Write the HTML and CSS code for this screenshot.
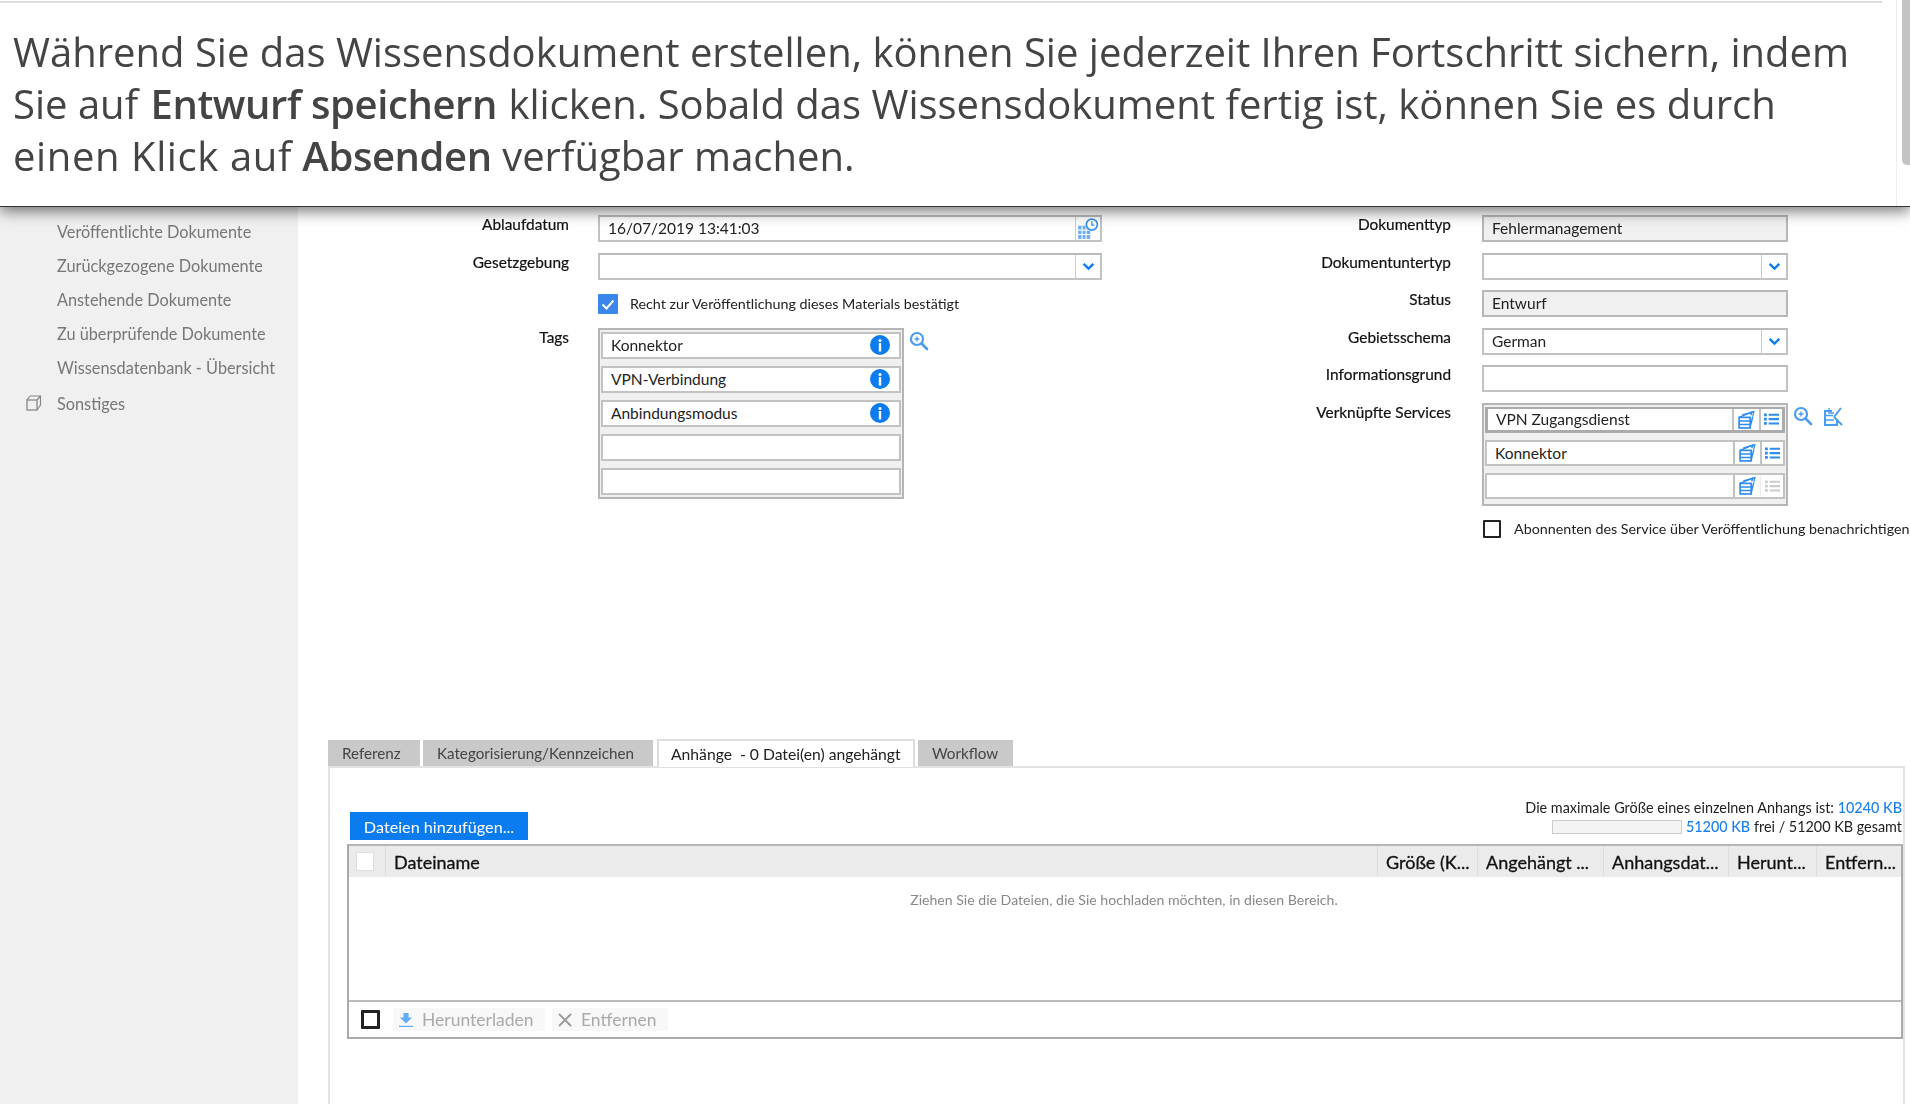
FILE: index.html

```html
<!DOCTYPE html>
<html lang="de">
  <head>
    <meta charset="UTF-8" />
    <title>Wissensdokument erstellen</title>
    <link rel="stylesheet" href="styles.css">
  </head>
  <body>
    <svg class="icon-defs" width="0" height="0">
      <symbol id="i-search" viewBox="0 0 20 20">
        <circle cx="8" cy="8" r="6" fill="none" stroke="currentColor" stroke-width="2.2"/>
        <path d="M12.5 12.5L18 18" stroke="currentColor" stroke-width="2.6" stroke-linecap="round"/>
        <path d="M5.5 8h5M8 5.5v5" stroke="currentColor" stroke-width="1.4"/>
      </symbol>
      <symbol id="i-info" viewBox="0 0 20 20">
        <circle cx="10" cy="10" r="10" fill="currentColor"/>
        <rect x="8.8" y="8" width="2.4" height="8.5" fill="#fff"/>
        <circle cx="10" cy="5.4" r="1.5" fill="#fff"/>
      </symbol>
      <symbol id="i-chevron" viewBox="0 0 12 8">
        <path d="M1.5 1.5L6 6l4.5-4.5" fill="none" stroke="currentColor" stroke-width="2.2"/>
      </symbol>
      <symbol id="i-stack" viewBox="0 0 18 18">
        <path d="M2 7l12-5-1 3" fill="none" stroke="currentColor" stroke-width="1.4"/>
        <path d="M5 4.5l11-3-1 4" fill="none" stroke="currentColor" stroke-width="1.2"/>
        <rect x="2" y="7" width="10.5" height="10" fill="none" stroke="currentColor" stroke-width="1.6"/>
        <path d="M2 10.4h10.5M2 13.7h10.5M12.5 16l2.5-10" stroke="currentColor" stroke-width="1.4" fill="none"/>
      </symbol>
      <symbol id="i-list" viewBox="0 0 16 14">
        <path d="M0 1h3v3H0zM0 5.6h3v3H0zM0 10.2h3v3H0zM5 1.4h11v2.2H5zM5 6h11v2.2H5zM5 10.6h11v2.2H5z" fill="currentColor"/>
      </symbol>
      <symbol id="i-edit" viewBox="0 0 20 20">
        <path d="M9 5H2v14h12v-6" fill="none" stroke="currentColor" stroke-width="2"/>
        <path d="M2 9.500h8M2 14h9" stroke="currentColor" stroke-width="1.600"/>
        <path d="M11 11l8 8M11 11l7-9" fill="none" stroke="currentColor" stroke-width="2"/>
        <path d="M6 2v5h5" fill="none" stroke="currentColor" stroke-width="1.300"/>
      </symbol>
      <symbol id="i-calendar" viewBox="0 0 20 20">
        <rect x="1" y="7" width="11" height="12" fill="currentColor" opacity=".75"/>
        <path d="M1 11h11M1 15h11M4.6 7v12M8.3 7v12" stroke="#fff" stroke-width="1"/>
        <circle cx="13.5" cy="6" r="5" fill="#fff" stroke="currentColor" stroke-width="1.6"/>
        <path d="M13.5 3v3.4h2.4" fill="none" stroke="currentColor" stroke-width="1.2"/>
      </symbol>
      <symbol id="i-copy" viewBox="0 0 16 16">
        <rect x="1" y="5" width="10" height="10" fill="none" stroke="currentColor" stroke-width="1.3"/>
        <path d="M1 5l3-4h10.500v9L11 15M11 5l3.500-4" fill="none" stroke="currentColor" stroke-width="1.2"/>
      </symbol>
    </svg>

    <!-- hint box on top of the screenshot -->
    <div class="banner">
      <div class="banner-rule"></div>
      <p>Während Sie das Wissensdokument erstellen, können Sie jederzeit Ihren Fortschritt sichern, indem<br>Sie auf <strong class="bold-first">Entwurf speichern</strong> klicken. Sobald das Wissensdokument fertig ist, können Sie es durch<br><span class="lead-wide">einen Klick auf</span> <strong>Absenden</strong> verfügbar machen.</p>
      <div class="scrollbar"><div class="scrollbar-thumb"></div></div>
    </div>

    <div class="app">
      <nav class="sidebar">
        <a class="nav-item">Veröffentlichte Dokumente</a>
        <a class="nav-item">Zurückgezogene Dokumente</a>
        <a class="nav-item">Anstehende Dokumente</a>
        <a class="nav-item">Zu überprüfende Dokumente</a>
        <a class="nav-item">Wissensdatenbank - Übersicht</a>
        <a class="nav-item nav-group"><svg class="nav-icon"><use href="#i-copy"/></svg>Sonstiges</a>
      </nav>

      <main class="main">
        <section class="form">
          <div class="form-side form-left">
            <label class="form-label">Ablaufdatum</label>
            <div class="field">
              <span class="field-text">16/07/2019 13:41:03</span>
              <span class="field-btn"><svg class="icon-calendar"><use href="#i-calendar"/></svg></span>
            </div>

            <label class="form-label">Gesetzgebung</label>
            <div class="field">
              <span class="field-text"></span>
              <span class="field-btn"><svg class="icon-chevron"><use href="#i-chevron"/></svg></span>
            </div>

            <span></span>
            <div class="check-row">
              <span class="check check-on">
                <svg viewBox="0 0 20 20"><path d="M4.500 10.500l4 4 7-8" fill="none" stroke="#fff" stroke-width="2"/></svg>
              </span>
              <span>Recht zur Veröffentlichung dieses Materials bestätigt</span>
            </div>

            <label class="form-label">Tags</label>
            <div class="with-tools">
              <div class="multi tags">
                <div class="multi-row"><span class="field-text">Konnektor</span><svg class="icon-info"><use href="#i-info"/></svg></div>
                <div class="multi-row"><span class="field-text">VPN-Verbindung</span><svg class="icon-info"><use href="#i-info"/></svg></div>
                <div class="multi-row"><span class="field-text">Anbindungsmodus</span><svg class="icon-info"><use href="#i-info"/></svg></div>
                <div class="multi-row"></div>
                <div class="multi-row"></div>
              </div>
              <svg class="tool-icon"><use href="#i-search"/></svg>
            </div>
          </div>

          <div class="form-side form-right">
            <label class="form-label">Dokumenttyp</label>
            <div class="field field-off"><span class="field-text">Fehlermanagement</span></div>

            <label class="form-label">Dokumentuntertyp</label>
            <div class="field">
              <span class="field-text"></span>
              <span class="field-btn"><svg class="icon-chevron"><use href="#i-chevron"/></svg></span>
            </div>

            <label class="form-label">Status</label>
            <div class="field field-off"><span class="field-text">Entwurf</span></div>

            <label class="form-label">Gebietsschema</label>
            <div class="field">
              <span class="field-text">German</span>
              <span class="field-btn"><svg class="icon-chevron"><use href="#i-chevron"/></svg></span>
            </div>

            <label class="form-label">Informationsgrund</label>
            <div class="field"></div>

            <label class="form-label">Verknüpfte Services</label>
            <div class="with-tools">
              <div class="multi services">
                <div class="multi-row multi-row-active">
                  <span class="field-text">VPN Zugangsdienst</span>
                  <span class="cell"><svg class="icon-stack"><use href="#i-stack"/></svg></span>
                  <span class="cell"><svg class="icon-list"><use href="#i-list"/></svg></span>
                </div>
                <div class="multi-row">
                  <span class="field-text">Konnektor</span>
                  <span class="cell"><svg class="icon-stack"><use href="#i-stack"/></svg></span>
                  <span class="cell"><svg class="icon-list"><use href="#i-list"/></svg></span>
                </div>
                <div class="multi-row">
                  <span class="field-text"></span>
                  <span class="cell"><svg class="icon-stack"><use href="#i-stack"/></svg></span>
                  <span class="cell cell-off"><svg class="icon-list"><use href="#i-list"/></svg></span>
                </div>
              </div>
              <svg class="tool-icon"><use href="#i-search"/></svg>
              <svg class="tool-icon tool-edit"><use href="#i-edit"/></svg>
            </div>

            <span></span>
            <div class="check-row check-row-notify">
              <span class="check"></span>
              <span>Abonnenten des Service über Veröffentlichung benachrichtigen</span>
            </div>
          </div>
        </section>

        <div class="tabs">
          <a class="tab">Referenz</a>
          <a class="tab tab-cat">Kategorisierung/Kennzeichen</a>
          <a class="tab tab-active">Anhänge&nbsp; - 0 Datei(en) angehängt</a>
          <a class="tab tab-flow">Workflow</a>
        </div>

        <section class="panel">
          <div class="panel-top">
            <button class="add-btn">Dateien hinzufügen...</button>
            <div class="quota">
              <div>Die maximale Größe eines einzelnen Anhangs ist: <b class="quota-num">10240 KB</b></div>
              <div class="quota-line"><span class="quota-bar"></span><span><b class="quota-num">51200 KB</b> frei / 51200 KB gesamt</span></div>
            </div>
          </div>

          <div class="files">
            <div class="files-head">
              <div class="head-cell"><span class="head-check"></span></div>
              <div class="head-cell">Dateiname</div>
              <div class="head-cell">Größe (K...</div>
              <div class="head-cell">Angehängt ...</div>
              <div class="head-cell">Anhangsdat...</div>
              <div class="head-cell">Herunt...</div>
              <div class="head-cell">Entfern...</div>
            </div>
            <div class="files-body">Ziehen Sie die Dateien, die Sie hochladen möchten, in diesen Bereich.</div>
            <div class="files-foot">
              <span class="check check-foot"></span>
              <span class="foot-btn foot-download">
                <svg class="foot-icon foot-icon-dl" viewBox="0 0 16 16"><path d="M5 0h6v5h4l-7 7-7-7h4zM0 14.500h16V16H0z" fill="#62aef5"/></svg>Herunterladen
              </span>
              <span class="foot-btn foot-remove">
                <svg class="foot-icon" viewBox="0 0 16 16"><path d="M2 2l12 12M14 2L2 14" stroke="#999" stroke-width="1.800"/></svg>Entfernen
              </span>
            </div>
          </div>
        </section>
      </main>
    </div>
  </body>
</html>
```

FILE: styles.css

```css
html,
body {
  margin: 0;
  padding: 0;
  height: 1104px;
  overflow: hidden;
  background: #fff;
}

body {
  font-family: "Lato", "Liberation Sans", sans-serif;
  color: #222;
}

.icon-defs {
  position: absolute;
}

/* Hint box */
.banner {
  position: relative;
  z-index: 2;
  height: 207px;
  box-sizing: border-box;
  padding-top: 1px;
  background: #fff;
  border-bottom: 1px solid #333;
  box-shadow: 0 4px 14px rgba(0, 0, 0, 0.55);
}

.banner-rule {
  height: 2px;
  margin-right: 28px;
  background: #ddd;
}

.banner p {
  margin: 23px 0 0 13px;
  font-family: "Open Sans", sans-serif;
  font-size: 40px;
  line-height: 52px;
  color: #444;
  white-space: nowrap;
}

.banner strong {
  font-weight: 600;
  letter-spacing: -0.4px;
}

.bold-first {
  margin: 0 1px 0 2px;
}

.lead-wide {
  letter-spacing: 0.6px;
}

.scrollbar {
  position: absolute;
  top: 0;
  right: 0;
  bottom: 0;
  width: 13px;
  border-left: 1px solid #eee;
}

.scrollbar-thumb {
  width: 8px;
  height: 165px;
  margin-left: 5px;
  background: #c4c4c4;
  border-radius: 0 0 0 5px;
}

/* Screenshot below */
.app {
  display: flex;
  height: 897px;
  filter: blur(0.4px);
}

.sidebar {
  flex: 0 0 298px;
  box-sizing: border-box;
  padding-top: 7px;
  background: #f0f0f0;
}

.nav-item {
  display: flex;
  align-items: center;
  height: 34px;
  padding-left: 57px;
  font-size: 16.3px;
  color: #777;
  white-space: nowrap;
}

.nav-group {
  position: relative;
  margin-top: 2px;
}

.nav-icon {
  position: absolute;
  left: 26px;
  top: 9px;
  width: 16px;
  height: 16px;
  color: #888;
}

.main {
  flex: 1;
  min-width: 0;
  padding: 0 5px 0 30px;
}

.form {
  display: flex;
  box-sizing: border-box;
  height: 533px;
  margin-left: -30px;
  padding-top: 8px;
}

.form-side {
  display: grid;
  align-content: start;
  row-gap: 10.5px;
}

.form-left {
  grid-template-columns: 271px 504px;
  column-gap: 29px;
}

.form-right {
  grid-template-columns: 201px 306px;
  column-gap: 31px;
  margin-left: 148px;
}

.form-label {
  text-align: right;
  font-size: 15.4px;
  line-height: 18px;
  color: #111;
  -webkit-text-stroke: 0.2px #111;
  white-space: nowrap;
}

.field {
  display: flex;
  align-items: stretch;
  box-sizing: border-box;
  height: 27px;
  border: 2px solid #c2c2c2;
  border-top-color: #bbb;
  background: #fff;
}

.field-off {
  background: #f0f0f0;
  border-color: #b8b8b8;
}

.field-text {
  flex: 1;
  min-width: 0;
  padding-left: 8px;
  font-size: 15.5px;
  line-height: 22px;
  color: #222;
  white-space: nowrap;
}

.field-btn {
  display: flex;
  align-items: center;
  justify-content: center;
  flex: 0 0 24px;
  border-left: 1px solid #ccc;
}

.icon-chevron {
  width: 13px;
  height: 9px;
  color: #0a7cf0;
}

.icon-calendar {
  width: 22px;
  height: 22px;
  color: #3d94ee;
}

.check-row {
  display: flex;
  align-items: center;
  gap: 12px;
  height: 27px;
  font-size: 14.3px;
  white-space: nowrap;
}

.check-row-notify {
  gap: 13px;
  margin: -1px 0 0 1px;
}

.check {
  flex: 0 0 auto;
  box-sizing: border-box;
  width: 18px;
  height: 18px;
  border: 2px solid #222;
  border-radius: 1px;
}

.check-on {
  width: 20px;
  height: 20px;
  border: 0;
  background: #3a86ea;
}

.check-on svg {
  display: block;
}

.with-tools {
  display: flex;
  align-items: flex-start;
  gap: 5px;
}

.tool-icon {
  flex: 0 0 auto;
  width: 20px;
  height: 20px;
  margin-top: 3px;
  color: #4a9cf0;
}

.tool-edit {
  margin-left: 5px;
}

.multi {
  flex: 0 0 auto;
  display: flex;
  flex-direction: column;
  gap: 7px;
  box-sizing: border-box;
  padding: 2px 1px 3px;
  border: 2px solid #b5b5b5;
  background: #f0f0f0;
}

.tags {
  width: 306px;
  height: 171px;
}

.services {
  width: 306px;
  height: 103px;
}

.multi-row {
  display: flex;
  align-items: center;
  flex: 0 0 27px;
  box-sizing: border-box;
  min-height: 0;
  border: 2px solid #c2c2c2;
  background: #fff;
}

.services .multi-row {
  flex-basis: 26px;
}

.multi-row-active {
  border-color: #ababab;
  border-width: 2px 3px 3px;
}

.icon-info {
  flex: 0 0 auto;
  width: 20px;
  height: 20px;
  margin-right: 9px;
  color: #0a7cf0;
}

.cell {
  display: flex;
  align-items: center;
  justify-content: center;
  align-self: stretch;
  flex: 0 0 27px;
  box-sizing: border-box;
  border-left: 2px solid #c2c2c2;
}

.cell + .cell {
  flex-basis: 23px;
}

.cell-off {
  border-left: 1px solid #eee;
}

.icon-stack {
  width: 19px;
  height: 19px;
  color: #2f8cf0;
}

.icon-list {
  width: 15px;
  height: 14px;
  color: #2f8cf0;
}

.cell-off .icon-list {
  color: #ccc;
}

/* Tabs */
.tabs {
  display: flex;
  gap: 3px;
  height: 26px;
}

.tab {
  display: flex;
  align-items: center;
  padding: 0 14px;
  width: 92px;
  box-sizing: border-box;
  background: #c9c9c9;
  font-size: 15.2px;
  color: #444;
  white-space: nowrap;
}

.tab-cat {
  width: 230px;
  margin-right: 1px;
}

.tab-active {
  width: 258px;
  padding: 0 12px;
  background: #fff;
  border: 2px solid #ddd;
  border-bottom: 0;
  color: #222;
  font-size: 15.7px;
  margin-top: -1px;
  height: 28px;
}

.tab-flow {
  width: 95px;
}

.panel {
  height: 340px;
  box-sizing: border-box;
  border: 2px solid #e2e2e2;
  border-bottom: 0;
  padding: 0 0 0 17px;
}

.panel-top {
  display: flex;
  justify-content: space-between;
  align-items: flex-end;
  height: 76px;
  padding-bottom: 4px;
  box-sizing: border-box;
}

.add-btn {
  width: 178px;
  height: 28px;
  margin-left: 3px;
  padding: 0;
  border: 0;
  background: #0a7cf0;
  color: #fff;
  font-family: inherit;
  font-size: 16.2px;
}

.quota {
  text-align: right;
  font-size: 14.4px;
  line-height: 18.5px;
  color: #222;
  margin: 0 1px 4px 0;
}

.quota-line {
  display: flex;
  align-items: center;
  justify-content: flex-end;
  gap: 4px;
}

.quota-num {
  font-weight: 500;
  color: #1a80ee;
}

.quota-bar {
  width: 130px;
  height: 14px;
  box-sizing: border-box;
  background: #f4f4f4;
  border: 1px solid #ccc;
}

.files {
  box-sizing: border-box;
  height: 195px;
  border: 2px solid #aaa;
  border-top-color: #b5b5b5;
}

.files-head {
  display: grid;
  grid-template-columns: 36px 992px 100px 126px 125px 88px 1fr;
  height: 31px;
  background: #ebebeb;
}

.head-cell {
  display: flex;
  align-items: center;
  padding-left: 8px;
  border-left: 1px solid #ddd;
  font-size: 18px;
  color: #111;
  -webkit-text-stroke: 0.3px #111;
  white-space: nowrap;
  overflow: hidden;
}

.head-cell:first-child {
  padding-left: 7px;
  border-left: 0;
}

.head-check {
  width: 18px;
  height: 19px;
  box-sizing: border-box;
  background: #fff;
  border: 1px solid #ddd;
}

.files-body {
  height: 125px;
  box-sizing: border-box;
  padding: 13px 2px 0 0;
  border-bottom: 2px solid #bbb;
  text-align: center;
  font-size: 14.1px;
  line-height: 20px;
  color: #888;
}

.files-foot {
  display: flex;
  align-items: center;
  gap: 7px;
  height: 35px;
  padding-left: 12px;
}

.check-foot {
  width: 19px;
  height: 19px;
  border-width: 3px;
  margin-right: 6px;
}

.foot-btn {
  display: flex;
  align-items: center;
  height: 23px;
  box-sizing: border-box;
  padding-left: 4px;
  background: #f8f8f8;
  font-size: 17.5px;
  color: #aaa;
  white-space: nowrap;
}

.foot-download {
  width: 152px;
}

.foot-remove {
  width: 116px;
}

.foot-icon {
  flex: 0 0 auto;
  width: 16px;
  height: 16px;
  margin: 0 8px 0 1px;
}

.foot-icon-dl {
  width: 14px;
  margin: 0 9px 0 2px;
}
```
